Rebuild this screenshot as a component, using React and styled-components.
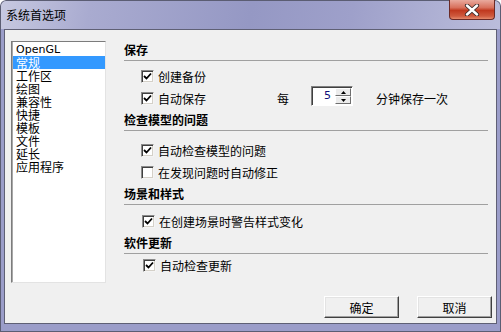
import React from 'react';
import styled, { createGlobalStyle } from 'styled-components';

const GlobalStyle = createGlobalStyle`
  html, body {
    margin: 0;
    padding: 0;
    background: #ffffff;
  }
  body {
    font-family: "Noto Sans CJK SC", "Liberation Sans", sans-serif;
    font-size: 12px;
    color: #000;
  }
`;

const Window = styled.div`
  width: 501px;
  height: 332px;
  box-sizing: border-box;
  display: flex;
  flex-direction: column;
  border-radius: 6px 6px 0 0;
  box-shadow: inset 0 0 0 1px #5b5d73;
  background:
    linear-gradient(100deg, #c7c9e1 0%, #a9abd0 18%, #9598c4 50%, #9ea0ca 70%, #bbbddb 100%) top / 100% 29px no-repeat,
    #9b9dc9;
  overflow: hidden;
`;

const TitleBar = styled.div`
  height: 29px;
  flex: none;
  display: flex;
  justify-content: space-between;
  padding-left: 6px;
  padding-right: 6px;
`;

const Title = styled.div`
  line-height: 29px;
  font-size: 12px;
  color: #000;
`;

const CloseButton = styled.div`
  width: 46px;
  height: 20px;
  box-sizing: border-box;
  border: 1px solid #6b2a26;
  border-top: none;
  border-radius: 0 0 4px 4px;
  background: linear-gradient(180deg, #e9aa9e 0%, #d8705c 40%, #c0391f 55%, #cf5a3e 85%, #e58a6c 100%);
  display: flex;
  align-items: center;
  justify-content: center;
`;

const Panel = styled.div`
  flex: 1;
  margin: 0 4px 8px 4px;
  border: 1px solid #5f6075;
  background: #f0f0f0;
  display: flex;
  flex-direction: column;
  padding: 9px 4px 5px 6px;
`;

const Main = styled.div`
  display: flex;
  gap: 18px;
`;

const List = styled.ul`
  list-style: none;
  margin: 2px 0 0 0;
  padding: 1px 0 0 0;
  width: 95px;
  height: 242px;
  box-sizing: border-box;
  background: #fff;
  border: 1px solid;
  border-color: #7c7c7c #e3e3e3 #e3e3e3 #7c7c7c;
  box-shadow: inset 1px 0 0 #a8a8a8;
  flex: none;
`;

const ListItem = styled.li`
  height: 13px;
  line-height: 13px;
  padding-left: 3px;
  margin-left: 1px;
  font-size: 12px;
  white-space: nowrap;
  background: ${(p) => (p.$selected ? '#3399ff' : 'transparent')};
  color: ${(p) => (p.$selected ? '#fff' : '#000')};
  font-family: ${(p) => (p.$latin ? '"DejaVu Sans", "Liberation Sans", sans-serif' : 'inherit')};
  font-size: ${(p) => (p.$latin ? '11px' : '12px')};
`;

const Settings = styled.div`
  width: 364px;
  display: flex;
  flex-direction: column;
`;

const Heading = styled.div`
  font-weight: 700;
  font-size: 12px;
  line-height: 16px;
  padding: 3px 0 2px;
  border-bottom: 1px solid #a0a0a0;
`;

const Rows = styled.div`
  display: flex;
  flex-direction: column;
  padding-top: ${(p) => p.$top}px;
`;

const Row = styled.div`
  height: 22px;
  display: flex;
  align-items: center;
  padding-left: ${(p) => p.$indent || 17}px;
`;

const CheckLabel = styled.label`
  display: flex;
  align-items: center;
  gap: 4px;
  width: ${(p) => (p.$width ? `${p.$width}px` : 'auto')};
  flex: none;
`;

const Box = styled.span`
  width: 13px;
  height: 13px;
  box-sizing: border-box;
  background: #fff;
  border: 1px solid;
  border-color: #8a8a8a #f4f4f4 #f4f4f4 #8a8a8a;
  box-shadow: inset 1px 1px 0 #404040, inset -1px -1px 0 #d4d0c8;
  display: flex;
  align-items: center;
  justify-content: center;
  flex: none;
`;

const Every = styled.span`
  width: 34px;
  flex: none;
`;

const Spinner = styled.div`
  width: 42px;
  height: 20px;
  box-sizing: border-box;
  background: #fff;
  border: 1px solid;
  border-color: #808080 #ffffff #ffffff #808080;
  box-shadow: inset 1px 1px 0 #404040;
  display: flex;
  flex: none;
  margin-top: -4px;
`;

const SpinValue = styled.span`
  flex: 1;
  text-align: right;
  padding-right: 4px;
  line-height: 18px;
  font-family: "DejaVu Sans", "Liberation Sans", sans-serif;
  font-size: 11px;
  color: #10107a;
`;

const SpinButtons = styled.div`
  width: 16px;
  display: flex;
  flex-direction: column;
  padding: 1px 1px 1px 0;
  gap: 0;
`;

const SpinButton = styled.div`
  flex: 1;
  background: #ececec;
  border: 1px solid;
  border-color: #ffffff #6f6f6f #6f6f6f #ffffff;
  display: flex;
  align-items: center;
  justify-content: center;
`;

const Suffix = styled.span`
  margin-left: 23px;
`;

const Footer = styled.div`
  margin-top: auto;
  display: flex;
  justify-content: flex-end;
  gap: 18px;
`;

const Button = styled.button`
  width: 75px;
  height: 22px;
  box-sizing: border-box;
  font-family: inherit;
  font-size: 12px;
  color: #000;
  background: #f0f0f0;
  border: 1px solid;
  border-color: #ffffff #404040 #404040 #ffffff;
  box-shadow: inset -1px -1px 0 #a0a0a0, inset 1px 1px 0 #e3e3e3;
  padding: 0;
`;

const Check = () => (
  <svg width="9" height="9" viewBox="0 0 9 9">
    <path d="M1 4 L3.5 6.5 L8 1.5" fill="none" stroke="#000" strokeWidth="1.8" />
  </svg>
);

const CheckBox = ({ checked, label, width }) => (
  <CheckLabel $width={width}>
    <Box>{checked && <Check />}</Box>
    <span>{label}</span>
  </CheckLabel>
);

const categories = ['OpenGL', '常规', '工作区', '绘图', '兼容性', '快捷', '模板', '文件', '延长', '应用程序'];

export default function App() {
  return (
    <>
      <GlobalStyle />
      <Window>
        <TitleBar>
          <Title>系统首选项</Title>
          <CloseButton>
            <svg width="16" height="12" viewBox="0 0 16 12">
              <path
                d="M3 1.5 L13 10.5 M13 1.5 L3 10.5"
                stroke="#3a2a2a"
                strokeWidth="4.2"
                strokeLinecap="round"
              />
              <path
                d="M3 1.5 L13 10.5 M13 1.5 L3 10.5"
                stroke="#ffffff"
                strokeWidth="2.4"
                strokeLinecap="round"
              />
            </svg>
          </CloseButton>
        </TitleBar>
        <Panel>
          <Main>
            <List>
              {categories.map((c, i) => (
                <ListItem key={c} $selected={i === 1} $latin={i === 0}>
                  {c}
                </ListItem>
              ))}
            </List>
            <Settings>
              <Heading>保存</Heading>
              <Rows $top={4}>
                <Row>
                  <CheckBox checked label="创建备份" />
                </Row>
                <Row>
                  <CheckBox checked label="自动保存" width={136} />
                  <Every>每</Every>
                  <Spinner>
                    <SpinValue>5</SpinValue>
                    <SpinButtons>
                      <SpinButton>
                        <svg width="5" height="3" viewBox="0 0 5 3">
                          <path d="M0 3 L2.5 0 L5 3 Z" fill="#000" />
                        </svg>
                      </SpinButton>
                      <SpinButton>
                        <svg width="5" height="3" viewBox="0 0 5 3">
                          <path d="M0 0 L2.5 3 L5 0 Z" fill="#000" />
                        </svg>
                      </SpinButton>
                    </SpinButtons>
                  </Spinner>
                  <Suffix>分钟保存一次</Suffix>
                </Row>
              </Rows>
              <Heading>检查模型的问题</Heading>
              <Rows $top={8}>
                <Row>
                  <CheckBox checked label="自动检查模型的问题" />
                </Row>
                <Row>
                  <CheckBox label="在发现问题时自动修正" />
                </Row>
              </Rows>
              <Heading>场景和样式</Heading>
              <Rows $top={5}>
                <Row $indent={18}>
                  <CheckBox checked label="在创建场景时警告样式变化" />
                </Row>
              </Rows>
              <Heading>软件更新</Heading>
              <Rows $top={0}>
                <Row $indent={19}>
                  <CheckBox checked label="自动检查更新" />
                </Row>
              </Rows>
            </Settings>
          </Main>
          <Footer>
            <Button>确定</Button>
            <Button>取消</Button>
          </Footer>
        </Panel>
      </Window>
    </>
  );
}
